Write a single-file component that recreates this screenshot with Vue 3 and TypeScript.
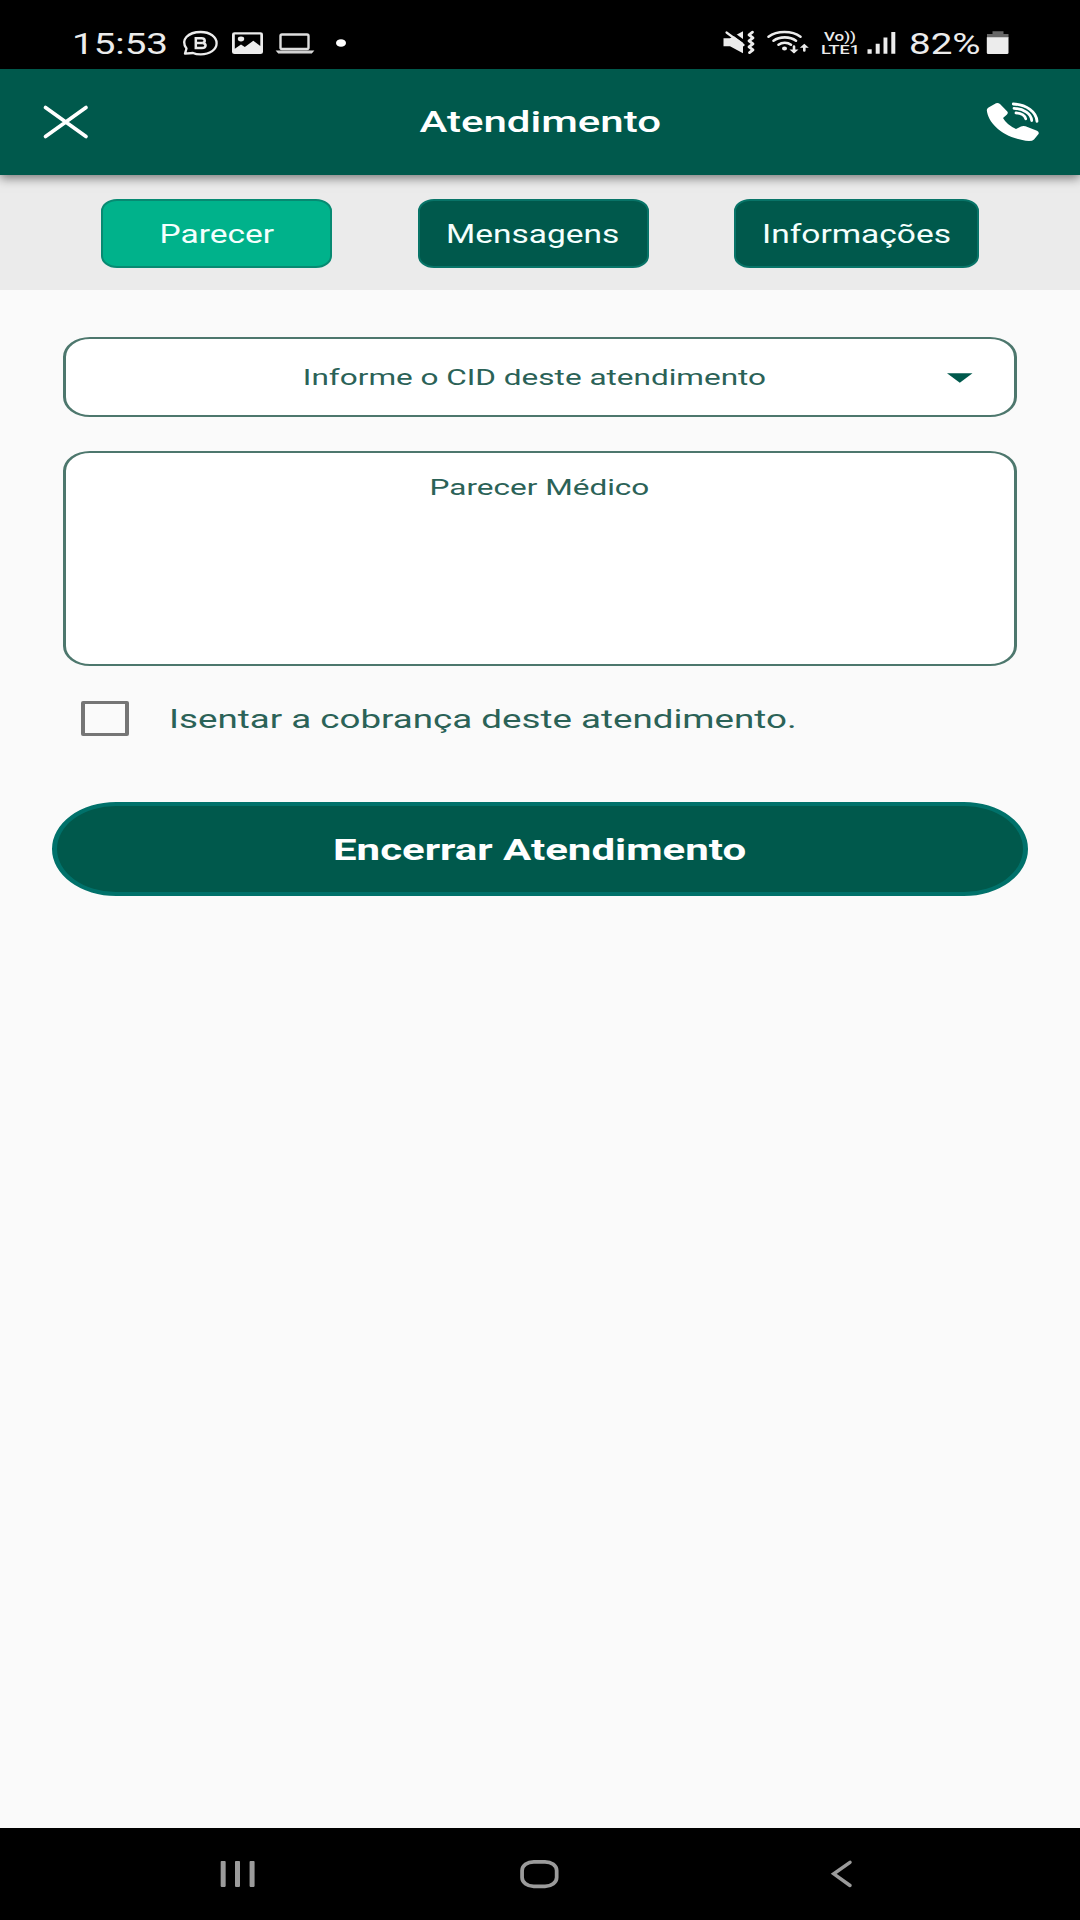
<script setup lang="ts">
import { ref } from 'vue'

interface Tab {
  id: string
  label: string
}

const tabs: Tab[] = [
  { id: 'parecer', label: 'Parecer' },
  { id: 'mensagens', label: 'Mensagens' },
  { id: 'informacoes', label: 'Informações' },
]
const activeTab = ref('parecer')
const exempt = ref(false)
</script>

<template>
  <div class="screen">
    <div class="status">
      <span class="clock"><span class="wide">15:53</span></span>
      <svg width="44" height="68" viewBox="180 0 44 68" fill="none" stroke="#ececec">
        <path d="M185 53.600L186.500 48.500C180 40 188 32 200.800 32C210 32 216.600 37 216.600 43.200S210 54.400 200.800 54.400Q196 54.400 193 53z" stroke-width="2.300" stroke-linejoin="round" />
        <path d="M195.800 38.200v9.800h6.200c4.800 0 4.500-4.800.5-5.100 3.200-.5 3-4.700-1-4.700zM195.800 42.900h6.500" stroke-width="2.500" />
      </svg>
      <svg width="48" height="68" viewBox="224 0 48 68">
        <path d="M234.500 32.300h26a2.500 2 0 0 1 2.500 2v17.600a2.500 2 0 0 1-2.500 2h-26a2.500 2 0 0 1-2.500-2V34.300a2.500 2 0 0 1 2.500-2z" fill="#ececec" />
        <path d="M234.800 34.500h25.500v11.500l-7-5.200-8.500 6.200-3.800-2.500-6.200 4.200z" fill="#000" />
        <ellipse cx="241" cy="39" rx="3.200" ry="2.400" fill="#ececec" />
      </svg>
      <svg width="48" height="68" viewBox="272 0 48 68" fill="none" stroke="#dedede">
        <rect x="280.500" y="34.500" width="28" height="14.500" rx="1.500" stroke-width="2.400" />
        <path d="M277 51.200h36l-1.500 1.600h-33z" stroke-width="1.200" fill="#dedede" />
      </svg>
      <svg width="40" height="68" viewBox="320 0 40 68">
        <ellipse cx="341" cy="43" rx="5" ry="3.800" fill="#fff" />
      </svg>
      <div class="spacer"></div>
      <svg width="40" height="68" viewBox="720 0 40 68">
        <path d="M723.500 38.200h6.500l13-7v22l-13-7h-6.500z" fill="#ececec" />
        <path d="M728 30l17.500 12.700" stroke="#000" stroke-width="3" />
        <path d="M726.500 32.500l17 12.500" stroke="#ececec" stroke-width="2.200" stroke-linecap="round" />
        <path d="M752.500 32.200l-3.500 2.600 4 3-4 3 4 3-4 3 4 3-3.500 2.800" fill="none" stroke="#ececec" stroke-width="2.800" stroke-linejoin="round" stroke-linecap="round" />
      </svg>
      <svg width="54" height="68" viewBox="760 0 54 68" fill="none" stroke="#ececec" stroke-width="2.600" stroke-linecap="round">
        <path d="M768.500 36.700C777 30.500 792 30.500 800.500 36.700M773.500 40.700c6-4.500 16.500-4.500 22.500 0M778.500 44.700c3.500-2.700 9-2.700 12.500 0" />
        <ellipse cx="784.500" cy="48.500" rx="2.500" ry="1.900" fill="#ececec" stroke="none" />
        <path d="M794 46.500v5M804.300 50.500v-4" />
        <path d="M789.500 49.500h9l-4.500 4zM799.800 47.700h9l-4.500-4z" fill="#ececec" stroke="none" />
      </svg>
      <svg class="volte" width="52" height="68" viewBox="814 0 52 68" fill="#ececec">
        <text x="824" y="41" textLength="32" lengthAdjust="spacingAndGlyphs">Vo))</text>
        <text x="821" y="54" textLength="39" lengthAdjust="spacingAndGlyphs">LTE1</text>
      </svg>
      <svg width="43" height="68" viewBox="866 0 43 68" fill="#ececec">
        <path d="M867.500 49.300h4.200v4.500h-4.200zM875.700 43.800h4v10h-4zM883.500 37.500h3.900v16.300h-3.900zM891.300 32h4v21.800h-4z" />
      </svg>
      <span class="battery-level"><span class="wide">82%</span></span>
      <svg width="96" height="68" viewBox="984 0 96 68">
        <path d="M992.500 31.300h11v2.700h5v4h-21.500v-4h5.500z" fill="#666" />
        <path d="M986.800 37.300h21.700v15.500a1.500 1.300 0 0 1-1.500 1.300h-18.700a1.500 1.300 0 0 1-1.500-1.300z" fill="#ececec" />
      </svg>
    </div>

    <header class="header">
      <button class="icon-btn" aria-label="Fechar">
        <svg width="130" height="106" viewBox="0 69 130 106">
          <path d="M45.500 107.500l40.500 29M86 107.500l-40.500 29" stroke="#fff" stroke-width="3.700" stroke-linecap="round" />
        </svg>
      </button>
      <h1><span class="wide">Atendimento</span></h1>
      <button class="icon-btn" aria-label="Ligar">
        <svg width="130" height="106" viewBox="949.500 69 130 106">
          <path d="M988 107.500L995.500 103.300Q997.500 102.500 999.500 104L1006.800 111.500Q1008 113 1006.500 114.500L1002.500 118Q1006 124.500 1015.500 129L1020.500 126.500Q1022.500 125.500 1025 126.300L1036.500 130.800Q1039 132 1038 134L1033.500 139.500Q1032 141 1028.500 141C1005 139 987.500 124.500 986.300 110Q986.300 108.500 988 107.500z" fill="#fff" />
          <g fill="none" stroke="#fff" stroke-width="2.800" stroke-linecap="round">
            <path d="M1012.800 104C1026 104.500 1036 112 1036.500 121.300" />
            <path d="M1013.500 108.300C1023.500 108.800 1030.700 114 1031.200 120.500" />
            <path d="M1015.500 112.800C1020.500 113.300 1024.500 115.500 1025.200 118.800" />
          </g>
        </svg>
      </button>
    </header>

    <nav class="tabs">
      <button
        v-for="tab in tabs"
        :key="tab.id"
        class="tab"
        :class="[tab.id, { active: tab.id === activeTab }]"
        @click="activeTab = tab.id"
      >
        <span class="wide">{{ tab.label }}</span>
      </button>
    </nav>

    <main class="content">
      <div class="field select">
        <span class="wide">Informe o CID deste atendimento</span>
        <svg class="caret" width="26" height="10" viewBox="0 0 26 10"><path d="M0 .3h25.500L12.800 9.800z" fill="#00594c" /></svg>
      </div>
      <div class="field area"><span class="wide">Parecer Médico</span></div>
      <div class="exempt" @click="exempt = !exempt">
        <span class="checkbox" :class="{ checked: exempt }"></span>
        <span class="wide">Isentar a cobrança deste atendimento.</span>
      </div>
      <button class="finish"><span class="wide">Encerrar Atendimento</span></button>
    </main>

    <footer class="system-nav">
      <svg width="360" height="92" viewBox="60 1828 360 92" fill="#9b9b9b">
        <rect x="216.800" y="1858.500" width="6" height="31" rx="1" />
        <rect x="234" y="1858.500" width="6" height="31" rx="1" />
        <rect x="251.500" y="1858.500" width="6" height="31" rx="1" />
      </svg>
      <svg width="360" height="92" viewBox="360 1828 360 92">
        <rect x="518.500" y="1859.300" width="41.500" height="29.500" rx="14" ry="10.500" fill="none" stroke="#9b9b9b" stroke-width="4.500" />
      </svg>
      <svg width="360" height="92" viewBox="660 1828 360 92">
        <path d="M852 1860l-19.500 13.800 19.500 14" fill="none" stroke="#9b9b9b" stroke-width="4.200" stroke-linecap="round" />
      </svg>
    </footer>
  </div>
</template>

<style>
body {
  margin: 0;
  background: #fafafa;
}
</style>

<style scoped>
.screen {
  width: 1080px;
  height: 1920px;
  display: flex;
  flex-direction: column;
  overflow: hidden;
  background: #fafafa;
  font-family: Roboto, 'Liberation Sans', sans-serif;
}
button {
  font: inherit;
  border: 0;
  margin: 0;
  padding: 0;
  background: none;
}
svg {
  display: block;
  flex: none;
}
.wide {
  display: inline-block;
  white-space: nowrap;
  transform: scaleX(1.4);
}
.status {
  height: 69px;
  flex: none;
  display: flex;
  background: #000;
  color: #ececec;
  font-size: 29px;
  line-height: 88px;
}
.status .wide {
  transform-origin: left;
  transform: scaleX(1.33);
}
.clock {
  width: 108px;
  padding-left: 72px;
}
.battery-level {
  width: 75px;
}
.spacer {
  flex: 1;
}
.volte {
  font-size: 13.5px;
  font-weight: 500;
}
.header {
  height: 106px;
  flex: none;
  display: flex;
  justify-content: space-between;
  background: #00594c;
  color: #fff;
  position: relative;
  box-shadow: 0 3px 10px rgba(0, 0, 0, 0.5);
}
.header h1 {
  margin: 0;
  font-size: 30px;
  font-weight: 500;
  line-height: 105px;
}
.tabs {
  height: 115px;
  flex: none;
  box-sizing: border-box;
  padding: 24px 101px 0;
  display: flex;
  justify-content: space-between;
  background: #ebebeb;
}
.tab {
  width: 231px;
  height: 69px;
  box-sizing: border-box;
  border: 2px solid #087468;
  border-radius: 16px / 12px;
  background: #00594c;
  color: #f4fffd;
  font-size: 25px;
  line-height: 66px;
}
.tab .wide {
  transform: translateY(1px) scaleX(1.34);
}
.tab.informacoes {
  width: 245px;
}
.tab.active {
  background: #00b28b;
  border-color: #078a72;
}
.content {
  flex: 1;
  display: flex;
  flex-direction: column;
  padding: 47px 63px 0;
}
.field {
  box-sizing: border-box;
  width: 954px;
  border: solid #4d776d;
  border-width: 2px 3px;
  border-radius: 27px / 20px;
  background: #fff;
  color: #2b6257;
  font-size: 22.5px;
  text-align: center;
}
.select {
  height: 80px;
  padding-right: 11px;
  line-height: 77px;
  position: relative;
}
.caret {
  position: absolute;
  right: 41px;
  top: 34px;
}
.area {
  height: 215px;
  margin-top: 34px;
  padding-right: 2px;
  line-height: 69px;
}
.exempt {
  display: flex;
  align-items: center;
  height: 35px;
  margin: 35px 0 0 18px;
  color: #2b6257;
  font-size: 26px;
}
.exempt .wide {
  transform-origin: left;
  transform: scaleX(1.412);
  margin-left: 40px;
}
.checkbox {
  width: 48px;
  height: 35px;
  box-sizing: border-box;
  border: solid #757575;
  border-width: 3px 4px;
  border-radius: 2px;
}
.checkbox.checked {
  background: #00594c;
}
.finish {
  width: 976px;
  height: 94px;
  margin: 66px -11px 0;
  box-sizing: border-box;
  border: solid #00716a;
  border-width: 4px 5px;
  border-radius: 64px / 47px;
  background: #00594c;
  color: #fff;
  font-size: 30px;
  font-weight: 700;
  line-height: 85px;
}
.system-nav {
  height: 92px;
  flex: none;
  display: flex;
  justify-content: center;
  background: #000;
}
.system-nav svg {
  width: 300px;
}
</style>
